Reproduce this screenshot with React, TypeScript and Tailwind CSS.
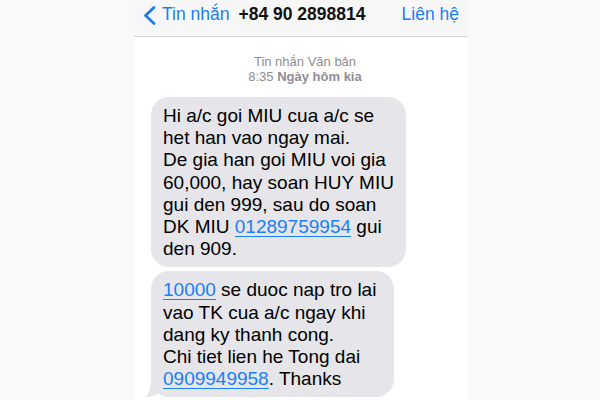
import React from "react";

const font = { fontFamily: '"Liberation Sans", Arial, Helvetica, sans-serif' };

function Link({ children }: { children: React.ReactNode }) {
  return (
    <span className="text-[#1a7ff8] underline decoration-1 underline-offset-[3px]">
      {children}
    </span>
  );
}

export default function App() {
  return (
    <div className="w-[600px] h-[400px] bg-[#f9f9fb] overflow-hidden" style={font}>
      <div className="ml-[134px] w-[334px] h-full bg-white flex flex-col">
        {/* nav bar */}
        <div className="h-[37px] shrink-0 bg-[#f7f7f8] border-b border-[#d4d4d8] flex items-center pb-[6px] pl-[9px] pr-[9px]">
          <svg width="13" height="19" viewBox="0 0 13 19" className="shrink-0">
            <path d="M11 1.5 L2.5 9.5 L11 17.5" fill="none" stroke="#1a7df6" strokeWidth="2.8" strokeLinecap="round" strokeLinejoin="round" />
          </svg>
          <span className="ml-[6px] text-[17.5px] leading-none text-[#1a7df6]">Tin nhắn</span>
          <span className="ml-[9px] text-[17.5px] leading-none font-bold text-[#111]">+84 90 2898814</span>
          <span className="ml-auto text-[17.5px] leading-none text-[#1a7df6]">Liên hệ</span>
        </div>

        {/* timestamp */}
        <div className="pt-[17px] flex flex-col items-center text-[13px] leading-[15px] text-[#8e8e93] pl-[8px]">
          <span>Tin nhắn Văn bản</span>
          <span>
            8:35 <span className="font-bold">Ngày hôm kia</span>
          </span>
        </div>

        {/* messages */}
        <div className="mt-[13px] pl-[17px] flex flex-col gap-[4px] text-[19px] leading-[22.2px] text-black">
          <div className="w-[255px] bg-[#e5e5ea] rounded-[18px] pl-[12px] pt-[8px] pb-[7px]">
            Hi a/c goi MIU cua a/c se
            <br />
            het han vao ngay mai.
            <br />
            De gia han goi MIU voi gia
            <br />
            60,000, hay soan HUY MIU
            <br />
            gui den 999, sau do soan
            <br />
            DK MIU <Link>01289759954</Link> gui
            <br />
            den 909.
          </div>
          <div className="relative w-[243px] bg-[#e5e5ea] rounded-[18px] pl-[12px] pt-[8px] pb-[7px]">
            <svg width="20" height="18" viewBox="0 0 20 18" className="absolute left-[-5px] bottom-0">
              <path d="M5 0 C5 9 3 14 0 18 C6 18 11 16 14 13 L20 13 L20 0 Z" fill="#e5e5ea" />
            </svg>
            <div className="relative">
              <Link>10000</Link> se duoc nap tro lai
              <br />
              vao TK cua a/c ngay khi
              <br />
              dang ky thanh cong.
              <br />
              Chi tiet lien he Tong dai
              <br />
              <Link>0909949958</Link>. Thanks
            </div>
          </div>
        </div>
      </div>
    </div>
  );
}
